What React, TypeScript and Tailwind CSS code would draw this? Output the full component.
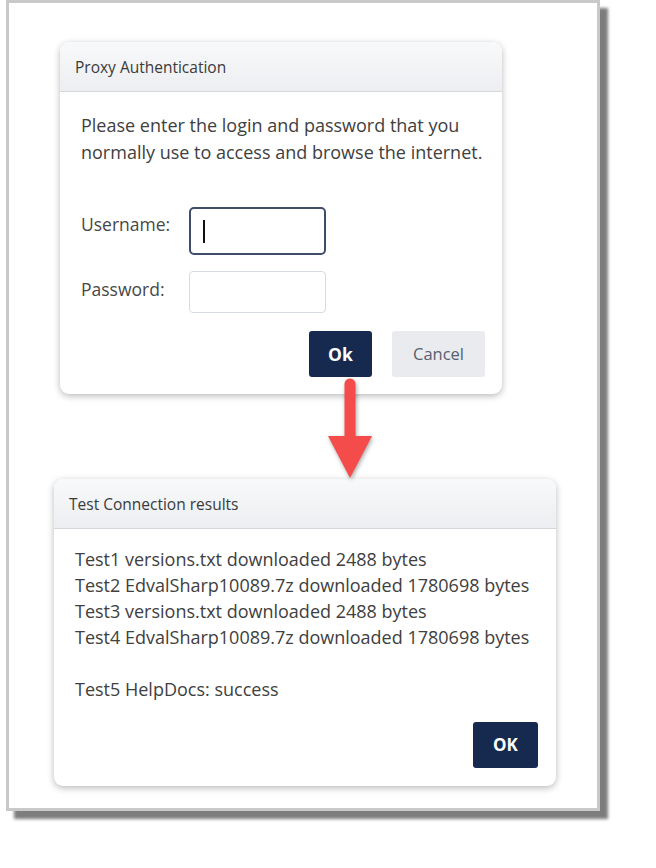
export default function App() {
  const font = { fontFamily: '"Open Sans", "Noto Sans", sans-serif' };
  return (
    <div className="w-[656px] h-[868px] bg-white pl-[6px]" style={font}>
      <div className="relative w-[594px] h-[811px] border-[3px] border-[#c9c9c9] bg-white shadow-[8px_8px_3px_#7d7d7d]">
        {/* Proxy Authentication dialog */}
        <div className="ml-[51px] mt-[39px] w-[442px] rounded-[9px] bg-white shadow-[0_2px_7px_rgba(0,0,0,0.28)] overflow-hidden">
          <div className="h-[50px] flex items-center pl-[15px] pt-[3px] bg-gradient-to-b from-[#f8f9fa] to-[#eceef1] border-b border-[#d4d7dc] text-[15.5px] text-[#3a3a3a]">
            Proxy Authentication
          </div>
          <div className="pt-[20px] pl-[21px] pr-[17px] pb-[17px] text-[#404040]">
            <p className="text-[18px] leading-[27px]">
              Please enter the login and password that you
              <br />
              normally use to access and browse the internet.
            </p>
            <div className="mt-[41px] flex flex-col gap-[16px]">
              <div className="flex items-start">
                <div className="w-[108px] pt-[5px] text-[17.5px] leading-[24px] text-[#474747]">Username:</div>
                <div className="w-[137px] h-[48px] border-2 border-[#3e4d6a] rounded-[5px] flex items-center pl-[12px]">
                  <div className="w-[1.5px] h-[23px] bg-[#111]" />
                </div>
              </div>
              <div className="flex items-start">
                <div className="w-[108px] pt-[6px] text-[17.5px] leading-[24px] text-[#474747]">Password:</div>
                <div className="w-[137px] h-[42px] border border-[#d6dae1] rounded-[4px]" />
              </div>
            </div>
            <div className="mt-[18px] flex justify-end gap-[20px]">
              <div className="w-[63px] h-[46px] rounded-[3px] bg-[#152a4e] text-white font-bold text-[17.5px] flex items-center justify-center">
                Ok
              </div>
              <div className="w-[93px] h-[46px] rounded-[3px] bg-[#e9ebef] text-[#56606e] text-[16.5px] flex items-center justify-center">
                Cancel
              </div>
            </div>
          </div>
        </div>

        {/* Test Connection results dialog */}
        <div className="ml-[45px] mt-[85px] w-[502px] rounded-[9px] bg-white shadow-[0_2px_7px_rgba(0,0,0,0.28)] overflow-hidden">
          <div className="h-[50px] flex items-center pl-[15px] pt-[3px] bg-gradient-to-b from-[#f8f9fa] to-[#eceef1] border-b border-[#d4d7dc] text-[15.5px] text-[#3a3a3a]">
            Test Connection results
          </div>
          <div className="pt-[17px] pl-[21px] pr-[18px] pb-[18px] text-[#404040]">
            <div className="text-[18px] leading-[26px]">
              <div>Test1 versions.txt downloaded 2488 bytes</div>
              <div>Test2 EdvalSharp10089.7z downloaded 1780698 bytes</div>
              <div>Test3 versions.txt downloaded 2488 bytes</div>
              <div>Test4 EdvalSharp10089.7z downloaded 1780698 bytes</div>
              <div className="h-[26px]" />
              <div>Test5 HelpDocs: success</div>
            </div>
            <div className="mt-[20px] flex justify-end">
              <div className="w-[65px] h-[46px] rounded-[3px] bg-[#152a4e] text-white font-bold text-[17px] flex items-center justify-center">
                OK
              </div>
            </div>
          </div>
        </div>

        {/* Arrow */}
        <svg
          className="absolute left-[317px] top-[371px]"
          width="50"
          height="112"
          viewBox="0 0 50 112"
          style={{ filter: 'drop-shadow(1px 2px 2px rgba(0,0,0,0.35))' }}
        >
          <line x1="24" y1="10" x2="24" y2="66" stroke="#f44c4a" strokeWidth="11" strokeLinecap="round" />
          <polygon points="2,62 46,62 24,104" fill="#f44c4a" />
        </svg>
      </div>
    </div>
  );
}
